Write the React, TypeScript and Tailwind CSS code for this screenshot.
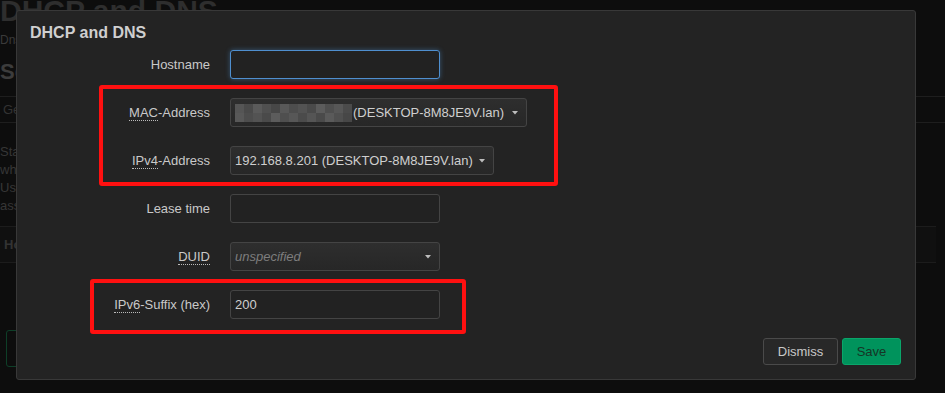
import React from "react";

const font = { fontFamily: '"Liberation Sans", Arial, sans-serif' };

function Caret() {
  return (
    <svg width="6" height="4" viewBox="0 0 6 4" className="shrink-0">
      <path d="M0 0 L6 0 L3 3.5 Z" fill="#bdbdbd" />
    </svg>
  );
}

function Abbr({ children }: { children: React.ReactNode }) {
  return <span className="border-b border-dotted border-[#bbb]">{children}</span>;
}

function Row({ label, children }: { label: React.ReactNode; children: React.ReactNode }) {
  return (
    <div className="flex items-center h-[29px]">
      <div className="w-[193px] text-right text-[13px] text-[#c9c9c9] leading-none">{label}</div>
      <div className="ml-[20px] flex">{children}</div>
    </div>
  );
}

function Blur() {
  const shades = ["#555", "#4a4a4a", "#5a5a5a", "#505050", "#474747", "#585858", "#4d4d4d", "#535353", "#4a4a4a", "#5c5c5c", "#4f4f4f", "#575757", "#4b4b4b"];
  return (
    <div className="flex h-[18px] w-[117px]">
      {shades.map((c, i) => (
        <div key={i} className="flex flex-col flex-1">
          <div className="flex-1" style={{ background: c }} />
          <div className="flex-1" style={{ background: shades[(i + 5) % shades.length] }} />
        </div>
      ))}
    </div>
  );
}

function Clip({ children, className }: { children: React.ReactNode; className?: string }) {
  return <div className={"w-[16px] overflow-hidden whitespace-nowrap " + (className ?? "")}>{children}</div>;
}

export default function App() {
  return (
    <div className="relative w-[945px] h-[393px] overflow-hidden bg-[#0d0d0d]" style={font}>
      {/* dimmed page behind */}
      <div className="flex flex-col text-[#3a3a3a]">
        <div className="h-[34px] flex items-center text-[30px] font-bold text-[#2e2e2e] leading-none -mt-[6px] whitespace-nowrap">DHCP and DNS</div>
        <Clip className="h-[24px] flex items-center text-[12px] text-[#3a3a3a]">Dnsmasq</Clip>
        <Clip className="h-[38px] flex items-center text-[22px] font-bold text-[#3c3c3c]">Server</Clip>
        <div className="h-[27px] mt-[6px] border-t border-b border-[#1e1e1e] flex items-center">
          <Clip className="pl-[3px] text-[13px] text-[#333]">General</Clip>
        </div>
        <div className="pt-[20px] flex flex-col text-[13px] leading-[18px] text-[#363636]">
          <Clip>Static</Clip>
          <Clip>where</Clip>
          <Clip>Use</Clip>
          <Clip>assigned</Clip>
        </div>
        <div className="mt-[11px] h-[37px] w-[936px] border-t border-b border-[#1c1c1c] bg-[#101010] flex items-center">
          <Clip className="pl-[4px] text-[13px] font-bold text-[#333]">Host</Clip>
        </div>
        <div className="mt-[67px] ml-[6px] h-[37px] w-[60px] rounded-[3px] border border-[#0e3f28]" />
      </div>

      {/* modal */}
      <div className="absolute left-[16px] top-[10px] w-[900px] h-[370px] rounded-[3px] border border-[#383838] bg-[#232323] flex flex-col">
        <div className="pl-[13px] pt-[12px] h-[39px] text-[16px] font-bold text-[#cfcfcf] leading-[20px]">DHCP and DNS</div>
        <div className="flex flex-col gap-[19px]">
          <Row label="Hostname">
            <div className="w-[210px] h-[29px] rounded-[3px] border border-[#4f8fcf] bg-[#222] shadow-[0_0_5px_rgba(80,150,220,0.45)]" />
          </Row>
          <Row label={<><Abbr>MAC</Abbr>-Address</>}>
            <div className="w-[297px] h-[29px] rounded-[3px] border border-[#444] bg-gradient-to-b from-[#2e2e2e] to-[#272727] flex items-center pl-[4px] pr-[8px] text-[13px] text-[#cfcfcf]">
              <Blur />
              <span className="ml-[1px]">(DESKTOP-8M8JE9V.lan)</span>
              <div className="flex-1" />
              <Caret />
            </div>
          </Row>
          <Row label={<><Abbr>IPv4</Abbr>-Address</>}>
            <div className="w-[264px] h-[29px] rounded-[3px] border border-[#444] bg-gradient-to-b from-[#2e2e2e] to-[#272727] flex items-center pl-[4px] pr-[8px] text-[13px] text-[#cfcfcf]">
              <span>192.168.8.201 (DESKTOP-8M8JE9V.lan)</span>
              <div className="flex-1" />
              <Caret />
            </div>
          </Row>
          <Row label="Lease time">
            <div className="w-[210px] h-[29px] rounded-[3px] border border-[#444] bg-[#222]" />
          </Row>
          <Row label={<Abbr>DUID</Abbr>}>
            <div className="w-[210px] h-[29px] rounded-[3px] border border-[#444] bg-gradient-to-b from-[#2e2e2e] to-[#272727] flex items-center pl-[4px] pr-[8px] text-[13px] italic text-[#7d7d7d]">
              <span>unspecified</span>
              <div className="flex-1" />
              <Caret />
            </div>
          </Row>
          <Row label={<><Abbr>IPv6</Abbr>-Suffix (hex)</>}>
            <div className="w-[210px] h-[29px] rounded-[3px] border border-[#444] bg-[#222] flex items-center pl-[4px] text-[13px] text-[#cfcfcf]">200</div>
          </Row>
        </div>
        <div className="flex-1" />
        <div className="flex justify-end gap-[4px] pr-[14px] pb-[14px]">
          <div className="w-[75px] h-[27px] rounded-[3px] border border-[#4a4a4a] bg-[#282828] flex items-center justify-center text-[13px] text-[#c8c8c8]">Dismiss</div>
          <div className="w-[59px] h-[27px] rounded-[3px] border border-[#0aa56a] bg-[#00935c] flex items-center justify-center text-[13px] text-[#163526]">Save</div>
        </div>
      </div>

      {/* red annotation boxes */}
      <div className="absolute left-[99px] top-[85px] w-[459px] h-[101px] rounded-[3px] border-[4px] border-[#ff1010]" />
      <div className="absolute left-[90px] top-[279px] w-[376px] h-[55px] rounded-[3px] border-[4px] border-[#ff1010]" />
    </div>
  );
}
